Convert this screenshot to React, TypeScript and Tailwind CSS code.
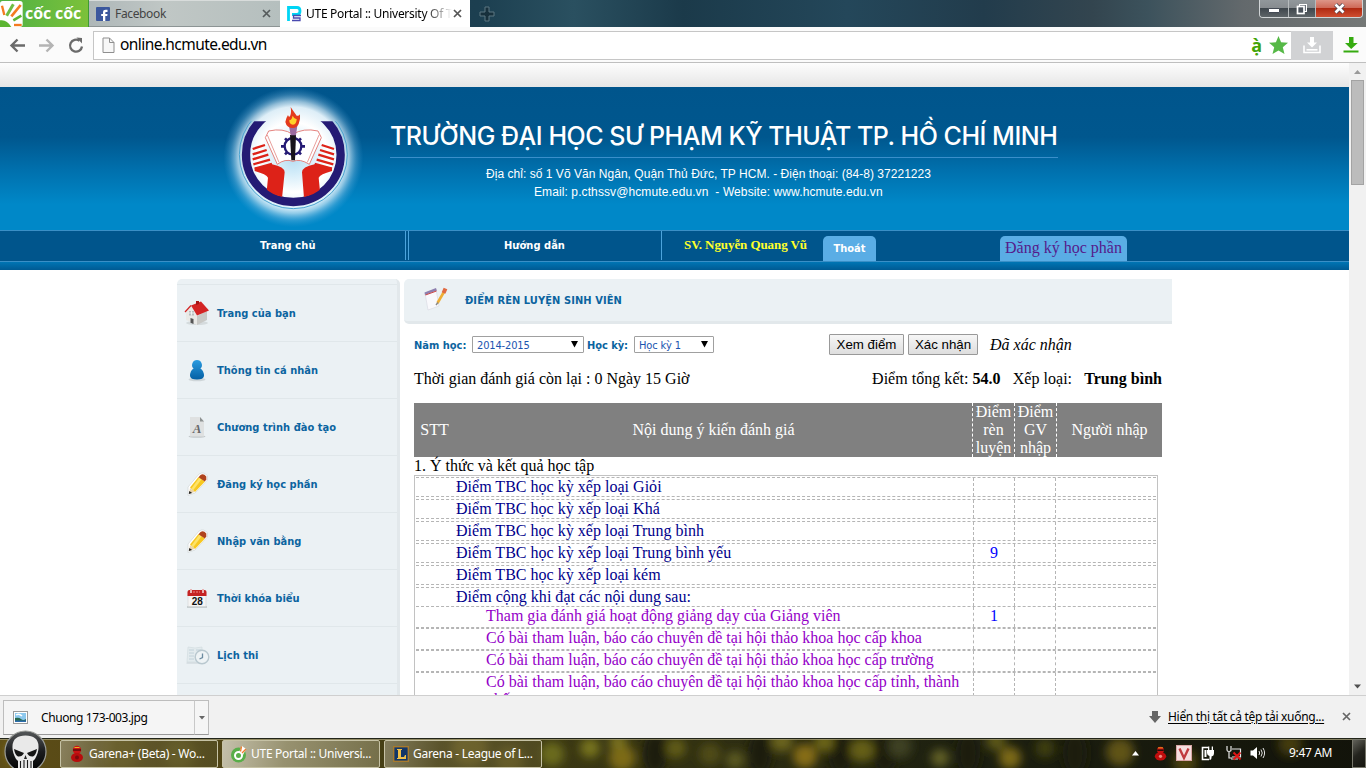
import React from "react";

const segoe = "font-['Noto_Sans','Open_Sans',sans-serif]";
const tahoma = "font-['DejaVu_Sans_Condensed','DejaVu_Sans',sans-serif]";
const times = "font-['Liberation_Serif',serif]";
const arial = "font-['Liberation_Sans',sans-serif]";

function CloseX({ color }: { color: string }) {
  return (
    <svg width="9" height="9" viewBox="0 0 9 9" className="shrink-0">
      <path d="M1 1l7 7M8 1l-7 7" stroke={color} strokeWidth="1.7" />
    </svg>
  );
}

function CocCocLogo() {
  return (
    <svg width="23" height="26" viewBox="0 0 69 78" className="shrink-0">
      <rect width="68" height="78" rx="8" fill="#fff" />
      <path d="M0 78V58Q20 54 34 78z" fill="#5cb531" />
      <path d="M6 14l7 28" stroke="#f47b20" strokeWidth="7" />
      <path d="M20 44L40 10" stroke="#6fbe44" strokeWidth="9" />
      <path d="M34 46L62 12" stroke="#f47b20" strokeWidth="8" />
      <path d="M40 58L64 44" stroke="#5cb531" strokeWidth="8" />
      <path d="M42 72h23" stroke="#f47b20" strokeWidth="7" />
    </svg>
  );
}

function TabStrip() {
  return (
    <div className="flex h-[27px] w-full bg-[linear-gradient(90deg,#1f3441_0%,#1c3f50_35%,#2a5060_42%,#1b3a4a_50%,#24475a_62%,#223c4c_72%,#33454f_80%,#3c525c_84%,#63696c_91%,#757877_100%)]">
      <div className="flex h-[27px] w-[89px] items-center border-r border-[#3f9b34] bg-[linear-gradient(90deg,#4fb144,#7cc13a)]">
        <CocCocLogo />
        <span className="ml-[2px] mb-[2px] font-['Open_Sans',sans-serif] text-[16px] font-bold leading-none tracking-[-0.1px] whitespace-nowrap text-white">cốc cốc</span>
      </div>
      <div className="flex h-[27px] w-[191px] items-center border-t border-b border-t-[#d8dcdb] border-b-[#8c9494] bg-[linear-gradient(90deg,#aeb7b8,#c0c7c5_40%,#b5bfbe)] pl-[7px] pr-[9px]">
        <svg width="14" height="14" viewBox="0 0 14 14" className="shrink-0">
          <rect width="14" height="14" rx="1" fill="#3b579d" />
          <path d="M7 14V9H5.200V7H7V5.500C7 3.500 8 2.800 9.700 2.800H11.500V5H10.200C9.500 5 9.300 5.300 9.300 6V7H11.500L11.200 9H9.300V14z" fill="#fff" />
        </svg>
        <span className={`${segoe} ml-[5px] text-[12px] leading-none text-[#444] whitespace-nowrap tracking-[-0.35px]`}>Facebook</span>
        <span className="grow" />
        <CloseX color="#555b5c" />
      </div>
      <div className="flex h-[27px] w-[190px] items-center bg-white pl-[7px] pr-[8px]">
        <svg width="15" height="16" viewBox="0 0 15 16" className="shrink-0">
          <path d="M1.500 15V1.500H10Q13 1.500 13 5T10 8.500H5" stroke="#00d5f5" strokeWidth="2.800" fill="none" />
          <path d="M14 9.500H6.500V12H13V14.500H5" stroke="#4a4ab0" strokeWidth="1.300" fill="none" />
        </svg>
        <span className={`${segoe} ml-[4px] w-[146px] text-[12px] leading-[18px] tracking-[-0.28px] whitespace-nowrap text-black [mask-image:linear-gradient(90deg,#000_118px,transparent_146px)]`}>UTE Portal :: University Of T</span>
        <span className="grow" />
        <CloseX color="#555" />
      </div>
      <div className="flex h-[27px] w-[34px] items-center justify-center">
        <svg width="16" height="16" viewBox="0 0 16 16">
          <path d="M6 1h4v5h5v4h-5v5H6v-5H1V6h5z" fill="#17303c" stroke="#5d7681" />
        </svg>
      </div>
      <div className="grow" />
      <div className="mr-[3px] flex h-[18px] w-[104px] overflow-hidden rounded-b-[4px] border border-t-0 border-[#d0d4d6]">
        <div className="flex w-[29px] items-center justify-center border-r border-[#b6bbbd] bg-[linear-gradient(#91979b_0,#878c90_45%,#3f474d_50%,#5d6468)]">
          <span className="mt-[3px] h-[5px] w-[12px] rounded-[1px] border border-[#444b55] bg-white" />
        </div>
        <div className="flex w-[27px] items-center justify-center border-r border-[#b6bbbd] bg-[linear-gradient(#91979b_0,#878c90_45%,#3f474d_50%,#5d6468)]">
          <svg width="12" height="12" viewBox="0 0 12 12">
            <rect x="3.500" y="1.500" width="7" height="7" fill="#6b737c" stroke="#fff" />
            <rect x="1.500" y="3.500" width="6.500" height="7" fill="#4b535c" stroke="#fff" strokeWidth="1.700" />
          </svg>
        </div>
        <div className="flex grow items-center justify-center bg-[linear-gradient(#dd9688_0,#cf6a58_45%,#b02a12_50%,#cf4e30)]">
          <svg width="13" height="11" viewBox="0 0 13 11">
            <path d="M2.500 1.500l8 8M10.500 1.500l-8 8" stroke="#4d4450" strokeWidth="4.200" />
            <path d="M2.500 1.500l8 8M10.500 1.500l-8 8" stroke="#fff" strokeWidth="2.600" />
          </svg>
        </div>
      </div>
    </div>
  );
}

function Toolbar() {
  return (
    <div className="flex h-[36px] items-center border-b border-[#bfbfbf] bg-[#fbfbfb] pt-px">
      <svg width="93" height="35" viewBox="0 0 93 35" className="shrink-0">
        <g fill="none" strokeWidth="2.400">
          <path d="M25 17.500H12M17.500 11.500l-6 6 6 6" stroke="#6b6b6b" />
          <path d="M39 17.500h13M46.500 11.500l6 6-6 6" stroke="#b4b4b4" />
          <path d="M79.500 12.700a6 6 0 1 0 2.500 5.800" stroke="#6b6b6b" strokeWidth="2.300" />
        </g>
        <path d="M76.500 9.500l5.500.5v5.500z" fill="#6b6b6b" />
      </svg>
      <div className="flex h-[29px] w-[1198px] items-center border border-r-0 border-[#c6c6c6] bg-white">
        <svg width="13" height="17" viewBox="0 0 13 17" className="ml-[8px] shrink-0">
          <path d="M1 1h6.500L12 5.500V15.500H1z" fill="#f7f7f7" stroke="#8f8f8f" />
          <path d="M7.500 1v4.500H12" fill="none" stroke="#8f8f8f" />
        </svg>
        <span className={`${segoe} ml-[5px] text-[15.500px] leading-none text-black whitespace-nowrap tracking-[-0.58px]`}>online.hcmute.edu.vn</span>
        <span className="grow" />
        <span className="mr-[7px] font-['Open_Sans',sans-serif] text-[18px] font-bold leading-none text-[#43a407]">ạ̀</span>
        <svg width="19" height="18" viewBox="0 0 19 18" className="mr-[3px] shrink-0">
          <path d="M9.500 0l2.600 6.200 6.900.5-5.200 4.500 1.700 6.800-6-3.600-6 3.600 1.700-6.800L0 6.700l6.900-.5z" fill="#56b947" />
        </svg>
      </div>
      <div className="flex h-[29px] w-[42px] items-center justify-center bg-[#d1d2d4]">
        <svg width="18" height="18" viewBox="0 0 18 18">
          <path d="M1 9.500v7h16v-7" stroke="#fff" strokeWidth="1.600" fill="none" />
          <path d="M3.500 13.800h11" stroke="#fff" strokeWidth="1.600" />
          <path d="M7 1h4v5.500h3L9 11.500 4 6.500h3z" fill="#fff" />
        </svg>
      </div>
      <svg width="16" height="16" viewBox="0 0 16 16" className="ml-[10px] shrink-0">
        <path d="M6 0h4.500v6h4.200L8.200 12 2 6h4z" fill="#36ab10" />
        <path d="M.5 13.500h15V15.500H.5z" fill="#36ab10" />
      </svg>
    </div>
  );
}

function UniversityLogo() {
  return (
    <svg width="187" height="143" viewBox="90 6 561 429" className="shrink-0">
      <defs>
        <radialGradient id="halo">
          <stop offset="0" stopColor="#b4dcf2" />
          <stop offset=".22" stopColor="#d2ecf9" />
          <stop offset=".5" stopColor="#fff" />
          <stop offset=".72" stopColor="#e9f6fd" stopOpacity=".95" />
          <stop offset=".8" stopColor="#cfe8f6" stopOpacity=".7" />
          <stop offset=".9" stopColor="#8cc5e8" stopOpacity=".3" />
          <stop offset="1" stopColor="#4fa5d8" stopOpacity="0" />
        </radialGradient>
        <clipPath id="below"><rect x="150" y="109" width="450" height="300" /></clipPath>
        <clipPath id="disc"><circle cx="370" cy="210" r="131" /></clipPath>
      </defs>
      <circle cx="370" cy="217" r="210" fill="url(#halo)" />
      <g clipPath="url(#below)" fill="none">
        <circle cx="370" cy="209" r="142" stroke="#241a74" strokeWidth="25" />
        <circle cx="370" cy="209" r="162" stroke="#4aa3d0" strokeWidth="3" />
      </g>
      <g clipPath="url(#disc)" fill="#dd2218">
        <path d="M254 248L306 238Q344 246 344 262L336 340H288L294 278Q290 268 254 258z" />
        <path d="M486 248L434 238Q396 246 396 262L402 340H452L446 278Q450 268 486 258z" />
      </g>
      <g stroke="#dd2218" strokeWidth="7">
        <path d="M248 192l37-12M248 208l42-13M248 223l47-14M250 238l50-14M254 251l52-14" />
        <path d="M492 192l-37-12M492 208l-42-13M492 223l-47-14M490 238l-50-14M486 251l-52-14" />
      </g>
      <path d="M296 138Q340 128 368 148Q400 128 444 138L454 158L418 238Q390 220 369 229Q345 220 322 238L286 158z" fill="#fff" stroke="#e5837f" strokeWidth="3" />
      <path d="M292 150L327 232M447 150L412 232" stroke="#e9a09c" strokeWidth="3" />
      <circle cx="369" cy="184" r="25" fill="none" stroke="#241a74" strokeWidth="7" />
      <g stroke="#241a74" strokeWidth="8">
        <path d="M369 160v-9M369 208v9M345 184h-12M393 184h12M352 167l-7-7M386 167l7-7M352 201l-7 7M386 201l7 7" />
      </g>
      <path d="M360 150h18l-3 76h-11z" fill="#17131a" />
      <path d="M357 122h25l-4 29h-16z" fill="#9b6aa0" />
      <path d="M362 66Q375 86 380 92Q386 94 390 88Q392 102 386 117Q380 129 369 129Q350 129 346 111Q348 99 354 90Q356 98 360 94Q365 84 362 66z" fill="#e43a1d" />
      <path d="M368 92Q374 104 380 102Q380 118 369 119Q357 118 358 104Q364 108 368 92z" fill="#ffd22a" />
    </svg>
  );
}

function Header() {
  return (
    <header>
      <div className="h-[24px] bg-[linear-gradient(#fdfdfd,#e6e6e6)]" />
      <div className="flex h-[143px] bg-[linear-gradient(#00558c_0,#00578e_35%,#0070ad_58%,#0088c8_82%,#0088c8_100%)] pl-[200px]">
        <UniversityLogo />
        <div className="ml-[3px] flex w-[668px] flex-col pt-[30px]">
          <h1 className="flex h-[41px] items-center border-b border-[#3a8fca] pb-px font-['Inter','Liberation_Sans',sans-serif] text-[25px] font-medium leading-none tracking-[-0.48px] whitespace-nowrap text-white">TRƯỜNG ĐẠI HỌC SƯ PHẠM KỸ THUẬT TP. HỒ CHÍ MINH</h1>
          <p className={`${arial} mt-[7px] pl-[96px] text-[12px] leading-[18px] tracking-[0.035px] whitespace-nowrap text-white`}>Địa chỉ: số 1 Võ Văn Ngân, Quận Thủ Đức, TP HCM. - Điện thoại: (84-8) 37221223</p>
          <p className={`${arial} pl-[144px] text-[12px] leading-[18px] tracking-[0.1px] whitespace-pre text-white`}>Email: p.cthssv@hcmute.edu.vn  - Website: www.hcmute.edu.vn</p>
        </div>
      </div>
      <nav className="flex h-[32px] border-t border-b border-[#3a8fc6] bg-[#00558c]">
        <a className={`${tahoma} w-[405px] pl-[260px] text-[11px] font-bold leading-[30px] tracking-[0.1px] whitespace-nowrap text-white`}>Trang chủ</a>
        <a className={`${tahoma} h-[29px] w-[257px] border-r border-l border-[#4da4dc] p-0 text-[11px] font-bold text-white`}>
          <span className="ml-[2px] block h-[29px] border-l border-[#4da4dc] pl-[95px] leading-[30px] tracking-[0.05px] whitespace-nowrap">Hướng dẫn</span>
        </a>
        <span className={`${times} w-[161px] pl-[22px] text-[13px] font-semibold leading-[28px] tracking-[-0.08px] whitespace-nowrap text-[#ffff2a]`}>SV. Nguyễn Quang Vũ</span>
        <a className={`${tahoma} mt-[5px] h-[25px] w-[53px] rounded-t-[5px] bg-[#5aade5] text-center text-[11px] font-bold leading-[26px] text-white`}>Thoát</a>
        <a className={`${times} mt-[5px] ml-[124px] h-[25px] w-[127px] rounded-t-[5px] bg-[#5aade5] text-center text-[16px] leading-[24px] whitespace-nowrap text-[#551a8b]`}>Đăng ký học phần</a>
      </nav>
      <div className="h-[8px] bg-[linear-gradient(#0075b4,#005a93)]" />
    </header>
  );
}

function HouseIcon() {
  return (
    <svg width="26" height="26" viewBox="0 0 26 26">
      <ellipse cx="13" cy="23" rx="11" ry="2" fill="#d5dbdd" />
      <path d="M2 12l5-6 6 10v9L2 20z" fill="#e9e9e6" />
      <path d="M13 16l10-5v9l-10 5z" fill="#c9c9c6" />
      <path d="M7 5.500L17 1.500 25 10.500 13 15.500z" fill="#d32424" />
      <path d="M7 5.500L1 12" stroke="#d32424" strokeWidth="1.200" />
      <path d="M12 1h3v3l-3 1z" fill="#a51616" />
      <rect x="5" y="11" width="5" height="4.500" fill="#b8bdbd" />
      <path d="M7.500 11v4.500M5 13h5" stroke="#fff" strokeWidth=".7" />
      <path d="M6.500 18l3 1v5l-3-1.300z" fill="#555" />
    </svg>
  );
}

function PersonIcon() {
  return (
    <svg width="26" height="26" viewBox="0 0 26 26">
      <defs><linearGradient id="person" x2="0" y2="1"><stop stopColor="#2a9be0" /><stop offset="1" stopColor="#0560a4" /></linearGradient></defs>
      <ellipse cx="13" cy="22.500" rx="8.500" ry="1.700" fill="#cfd6d9" />
      <path d="M13 3a5 5 0 0 1 3.400 8.600Q20 14 20 19Q19.500 22.500 13 22.500T6 19Q6 14 9.600 11.600A5 5 0 0 1 13 3z" fill="url(#person)" />
    </svg>
  );
}

function LetterIcon() {
  return (
    <svg width="26" height="26" viewBox="0 0 26 26">
      <ellipse cx="13" cy="22.500" rx="8.500" ry="1.300" fill="#c3c9cb" />
      <path d="M6 3h10l4 4.500v15H6z" fill="#dfe1e1" />
      <path d="M16 3l4 4.500h-4z" fill="#8d9292" />
      <text x="13" y="18.500" textAnchor="middle" fontFamily="Liberation Serif" fontStyle="italic" fontWeight="bold" fontSize="13" fill="#686868">A</text>
    </svg>
  );
}

function PencilIcon() {
  return (
    <svg width="26" height="26" viewBox="0 0 26 26">
      <path d="M4 16L15 3Q20 0 23.500 5V9L11 22L4 24.500z" fill="#fff" stroke="#d4dadc" strokeWidth=".8" />
      <path d="M6 16.500L14.500 6l6.500 4.500L11 21z" fill="#f7c821" />
      <path d="M7.500 17.500l8-11 2.300 1.600L9 19.500z" fill="#fde36a" />
      <path d="M14.500 6.200l2-2.200Q19.500 2 22.300 5.500V8.500l-1.500 2z" fill="#b0431d" />
      <path d="M6 17l4.900 3.700L5 23z" fill="#e9d3a8" />
      <path d="M5.300 20l2.900 1.900L4.800 23z" fill="#222" />
    </svg>
  );
}

function CalendarIcon() {
  return (
    <svg width="26" height="26" viewBox="0 0 26 26">
      <path d="M3 22h20" stroke="#bcc3c6" strokeWidth="1.500" />
      <rect x="4" y="6" width="18" height="15.500" rx="1" fill="#f4f4f4" stroke="#cfcfcf" strokeWidth=".5" />
      <path d="M3.500 11V7Q3.500 5 5.500 5h15q2 0 2 2v4z" fill="#c52323" />
      <path d="M7 4v4M19 4v4" stroke="#e9b2b2" strokeWidth="2" />
      <path d="M9 7h7" stroke="#e88" strokeWidth="1" strokeDasharray="2 1" />
      <text x="13.200" y="19.800" textAnchor="middle" fontFamily="Liberation Sans" fontWeight="bold" fontSize="10" fill="#111">28</text>
    </svg>
  );
}

function ScheduleIcon() {
  return (
    <svg width="26" height="26" viewBox="0 0 26 26">
      <path d="M4 5l7 1 7-1v15H3z" fill="#e3ebee" stroke="#cfdadd" strokeWidth=".6" />
      <path d="M5 8h5M5 11h5M5 14h5M12 8h5M5 17h5" stroke="#c2d2da" />
      <path d="M2.500 21h14" stroke="#c8d1d5" />
      <circle cx="18" cy="15" r="6.800" fill="#eef3f5" stroke="#b9c8cf" strokeWidth="1.400" />
      <path d="M18.500 11.500V15.500L15.500 17" stroke="#6c8ba0" strokeWidth="1.300" fill="none" />
    </svg>
  );
}

const menu = [
  { label: "Trang của bạn", icon: <HouseIcon /> },
  { label: "Thông tin cá nhân", icon: <PersonIcon /> },
  { label: "Chương trình đào tạo", icon: <LetterIcon /> },
  { label: "Đăng ký học phần", icon: <PencilIcon /> },
  { label: "Nhập văn bằng", icon: <PencilIcon /> },
  { label: "Thời khóa biểu", icon: <CalendarIcon /> },
  { label: "Lịch thi", icon: <ScheduleIcon /> },
  { label: "", icon: null },
];

function Sidebar() {
  return (
    <aside className="h-[430px] w-[223px] shrink-0 rounded-t-[5px] border-r-[3px] border-[#e2e8eb] bg-[#ebf1f4] pt-[5px]">
      {menu.map((m, i) => (
        <div key={i} className="flex h-[57px] items-center border-t border-[#e0e7ea] pl-[7px]">
          {m.icon}
          <span className={`${tahoma} mt-[2px] ml-[7px] text-[11px] font-bold tracking-[0.03px] whitespace-nowrap text-[#0b64a0]`}>{m.label}</span>
        </div>
      ))}
    </aside>
  );
}

const rows = [
  { t: "Điểm TBC học kỳ xếp loại Giỏi", v: "" },
  { t: "Điểm TBC học kỳ xếp loại Khá", v: "" },
  { t: "Điểm TBC học kỳ xếp loại Trung bình", v: "" },
  { t: "Điểm TBC học kỳ xếp loại Trung bình yếu", v: "9" },
  { t: "Điểm TBC học kỳ xếp loại kém", v: "" },
  { t: "Điểm cộng khi đạt các nội dung sau:", v: "" },
];

const subRows = [
  { t: "Tham gia đánh giá hoạt động giảng dạy của Giảng viên", v: "1" },
  { t: "Có bài tham luận, báo cáo chuyên đề tại hội thảo khoa học cấp khoa", v: "" },
  { t: "Có bài tham luận, báo cáo chuyên đề tại hội thảo khoa học cấp trường", v: "" },
  { t: "Có bài tham luận, báo cáo chuyên đề tại hội thảo khoa học cấp tỉnh, thành phố", v: "" },
];

function ScoreCells({ v }: { v: string }) {
  return (
    <>
      <span className="w-[41px] shrink-0 border-l border-dashed border-[#b5b5b5] text-center text-[#0000ff]">{v}</span>
      <span className="w-[41px] shrink-0 border-l border-dashed border-[#b5b5b5]" />
      <span className="grow border-l border-dashed border-[#b5b5b5]" />
    </>
  );
}

function SelectBox({ value, wide }: { value: string; wide?: boolean }) {
  return (
    <div className={`${tahoma} ${wide ? "w-[112px]" : "w-[80px]"} flex h-[17px] items-center justify-between rounded-[1px] border border-[#a0a0a0] bg-white pr-[5px] pl-[4px] text-[11px] leading-none text-[#1b55b0] whitespace-nowrap`}>
      <span className="mt-px tracking-[-0.15px]">{value}</span>
      <svg width="7" height="7" viewBox="0 0 7 7"><path d="M0 0h7L3.500 6.500z" fill="#000" /></svg>
    </div>
  );
}

function Content() {
  return (
    <main className={`${times} ml-[4px] w-[768px] text-[16px] text-black`}>
      <div className="flex h-[45px] items-center rounded-l-[5px] border-b-[3px] border-[#e2e8eb] bg-[#ebf1f4] pl-[19px]">
        <svg width="26" height="26" viewBox="0 0 26 26" className="shrink-0">
          <path d="M2 6l11-4 3 17-11 4z" fill="#f9f9fc" stroke="#d6d7e0" strokeWidth=".6" />
          <path d="M1.500 5.500L13 1l.8 2.500L2 8z" fill="#8d7fae" />
          <path d="M2.500 8l11-4" stroke="#c44" strokeWidth="1" />
          <path d="M21.500 4L14.500 16" stroke="#eeae35" strokeWidth="2.600" />
          <path d="M22.500 1.500L20.500 6" stroke="#e06a42" strokeWidth="4" />
          <path d="M15 15.500l-2 2.500" stroke="#888" strokeWidth="1.400" />
        </svg>
        <h2 className={`${tahoma} mt-[3px] ml-[16px] text-[11px] font-bold tracking-[0.08px] whitespace-nowrap text-[#0b64a0]`}>ĐIỂM RÈN LUYỆN SINH VIÊN</h2>
      </div>
      <div className="flex h-[21px] items-center pl-[10px] mt-[10px]">
        <span className={`${tahoma} mt-[3px] w-[58px] text-[11px] font-bold tracking-[0px] whitespace-nowrap text-[#0b64a0]`}>Năm học:</span>
        <SelectBox value="2014-2015" wide />
        <span className={`${tahoma} mt-[3px] ml-[3px] w-[47px] text-[11px] font-bold tracking-[-0.05px] whitespace-nowrap text-[#0b64a0]`}>Học kỳ:</span>
        <SelectBox value="Học kỳ 1" />
        <button className={`${arial} ml-[115px] h-[21px] w-[75px] rounded-[1px] border border-[#999] bg-[linear-gradient(#f6f6f6,#dedede)] text-[13.300px] leading-[17px] whitespace-nowrap`}>Xem điểm</button>
        <button className={`${arial} ml-[4px] h-[21px] w-[70px] rounded-[1px] border border-[#999] bg-[linear-gradient(#f6f6f6,#dedede)] text-[13.300px] leading-[17px] whitespace-nowrap`}>Xác nhận</button>
        <em className="ml-[12px] whitespace-nowrap">Đã xác nhận</em>
      </div>
      <div className="mt-[15px] flex h-[18px] justify-between pr-[10px] pl-[10px] leading-[18px] whitespace-pre">
        <span>Thời gian đánh giá còn lại : 0 Ngày 15 Giờ</span>
        <span className="tracking-[0.03px]">Điểm tổng kết: <b>54.0</b>   Xếp loại:   <b>Trung bình</b></span>
      </div>
      <div className="mt-[15px] ml-[10px] flex h-[54px] w-[748px] items-center bg-[#808080] text-center leading-[18px] text-white">
        <span className="w-[41px]">STT</span>
        <span className="w-[517px]">Nội dung ý kiến đánh giá</span>
        <span className="h-[54px] w-[42px] border-l border-dashed border-white">Điểm rèn luyện</span>
        <span className="h-[54px] w-[42px] border-l border-dashed border-white">Điểm GV nhập</span>
        <span className="h-[54px] w-[106px] border-l border-dashed border-white leading-[54px]">Người nhập</span>
      </div>
      <p className="ml-[10px] h-[18px] leading-[18px]">1. Ý thức và kết quả học tập</p>
      <div className="ml-[10px] w-[744px] border border-[#c2c2c2] px-px pt-px leading-[18px] whitespace-nowrap">
        {rows.map((r, i) => (
          <div key={i} className={`${i === rows.length - 1 ? "" : "mb-[2px]"} flex h-[20px] border-t border-b border-dashed border-[#b5b5b5]`}>
            <span className="w-[557px] shrink-0 pl-[40px] tracking-[0.02px] text-[#00008b]">{r.t}</span>
            <ScoreCells v={r.v} />
          </div>
        ))}
        {subRows.map((r, i) => (
          <div key={i} className={`${i === 0 ? "h-[21px]" : i === 3 ? "h-[60px] border-t" : "h-[22px] border-t"} flex border-b border-dashed border-[#b5b5b5]`}>
            <span className="w-[557px] shrink-0 pl-[70px] whitespace-normal text-[#9400c8]">{r.t}</span>
            <ScoreCells v={r.v} />
          </div>
        ))}
      </div>
    </main>
  );
}

function Scrollbar() {
  return (
    <div className="flex h-[632px] w-[17px] flex-col items-center bg-[#f1f1f1]">
      <svg width="17" height="17" viewBox="0 0 17 17"><path d="M5 11l3.500-4L12 11z" fill="#9a9a9a" /></svg>
      <div className="h-[105px] w-[13px] border border-[#a3a3a3] bg-[#bcbcbc]" />
      <span className="grow" />
      <svg width="17" height="17" viewBox="0 0 17 17"><path d="M5 6.500h7l-3.500 4z" fill="#505050" /></svg>
    </div>
  );
}

function DownloadBar() {
  return (
    <div className="flex h-[43px] shrink-0 border-t border-[#cfcfcf] bg-[#f1f1f1] pt-[4px] pl-[3px]">
      <div className="flex h-[35px] w-[192px] items-center border border-[#bdbdbd] border-b-[#999] border-r-[#c8c8c8] bg-[#f5f5f5] pl-[9px]">
        <svg width="15" height="13" viewBox="0 0 15 13">
          <rect x=".5" y=".5" width="14" height="12" fill="#fff" stroke="#9a9a9a" />
          <rect x="2" y="2" width="11" height="9" fill="#8cc8ee" />
          <path d="M2 7q4-1 6 1t5 0v3H2z" fill="#27684e" /><path d="M2 9.500h11V11H2z" fill="#2d6cae" />
          <path d="M3 4q3-2 6 1" stroke="#fff" strokeWidth="1.500" fill="none" />
        </svg>
        <span className={`${segoe} ml-[13px] text-[12px] leading-none tracking-[-0.4px] whitespace-nowrap text-black`}>Chuong 173-003.jpg</span>
      </div>
      <div className="flex h-[35px] w-[14px] items-center justify-center border border-l-0 border-[#bdbdbd] border-b-[#999] bg-[#f5f5f5]">
        <svg width="6" height="4" viewBox="0 0 6 4"><path d="M0 0h6L3 3.500z" fill="#666" /></svg>
      </div>
      <span className="grow" />
      <div className="flex h-[33px] items-center">
        <svg width="12" height="12" viewBox="0 0 12 12"><path d="M3 0h6v5h3l-6 7-6-7h3z" fill="#666" /></svg>
        <span className={`${segoe} ml-[7px] w-[155px] text-[12px] leading-none tracking-[-0.3px] whitespace-nowrap text-black underline underline-offset-2`}>Hiển thị tất cả tệp tải xuống...</span>
        <span className="ml-[19px] mr-[15px] flex"><CloseX color="#666" /></span>
      </div>
    </div>
  );
}

const blobs = [
  [20, 14, 14, "#8a741c"], [552, 16, 12, "#6b6a1c"], [590, 10, 10, "#77731e"], [622, 20, 13, "#7d6a18"], [618, 4, 9, "#78701e"],
  [676, 10, 10, "#605c14"], [710, 16, 11, "#504c18"], [735, 22, 9, "#5c5a20"], [782, 3, 11, "#6a641c"], [805, 18, 12, "#866d15"],
  [824, 4, 10, "#6c6514"], [862, 12, 12, "#655e12"], [900, 8, 12, "#3c4020"], [940, 20, 9, "#626026"], [996, 3, 10, "#5c5618"],
  [1010, 20, 11, "#7b6916"], [1045, 10, 10, "#3c3c10"], [1120, 14, 14, "#5e5214"], [1185, 24, 12, "#4c4311"], [1290, 6, 12, "#423b10"],
  [120, 12, 20, "#6b5d1b"], [180, 16, 16, "#6e6524"], [470, 10, 18, "#7a6c22"], [510, 22, 14, "#746824"],
] as const;

const taskButtons = [
  {
    label: "Garena+ (Beta) - Wo...", active: false,
    icon: <svg width="16" height="18" viewBox="0 0 16 18"><circle cx="8" cy="5" r="4.200" fill="#c91414" /><ellipse cx="8" cy="12.500" rx="6" ry="4.600" fill="#b80d0d" /><path d="M4 5h8" stroke="#5b0a0a" strokeWidth="1.500" /><path d="M5.500 2.500h5" stroke="#eab020" /><circle cx="8" cy="12.500" r="2" fill="#7b0b0b" /></svg>,
  },
  {
    label: "UTE Portal :: Universi...", active: true,
    icon: <svg width="16" height="18" viewBox="0 0 16 18"><circle cx="7.500" cy="10" r="7.500" fill="#58ae49" /><circle cx="7.500" cy="10.500" r="3.500" fill="none" stroke="#fff" strokeWidth="2" /><path d="M8 7l3-6 4 3-3 6z" fill="#fff" /><path d="M9.500 6.500l1-5M11 8l4-4" stroke="#ef7b2c" strokeWidth="1.300" /></svg>,
  },
  {
    label: "Garena - League of L...", active: false,
    icon: <svg width="16" height="16" viewBox="0 0 16 16"><rect x=".7" y=".7" width="14.600" height="14.600" fill="#123668" stroke="#a87a2c" strokeWidth="1.400" /><path d="M4 3h5v1H8v7h3l1-2h1v4H4v-1h1V4H4z" fill="#f0bf48" /></svg>,
  },
];

function Taskbar() {
  return (
    <div className="relative h-[30px] w-full shrink-0 overflow-visible">
      <svg width="1366" height="30" viewBox="0 0 1366 30" className="absolute inset-0">
        <defs>
          <filter id="soft" x="-5%" y="-100%" width="110%" height="300%"><feGaussianBlur stdDeviation="5" /></filter>
          <linearGradient id="base"><stop stopColor="#5d4d17" /><stop offset=".4" stopColor="#3c3913" /><stop offset=".7" stopColor="#1d2010" /><stop offset="1" stopColor="#12130a" /></linearGradient>
        </defs>
        <rect width="1366" height="30" fill="url(#base)" />
        <g filter="url(#soft)">
          {[655, 760, 840, 885, 968, 1075].map((x) => <ellipse key={x} cx={x} cy="15" rx="12" ry="22" fill="#1a1d0c" />)}
          {blobs.map(([x, y, r, c], i) => <ellipse key={i} cx={x} cy={y} rx={r} ry={r} fill={c} />)}
        </g>
        <path d="M0 .5h1366" stroke="#22251a" /><path d="M0 1.500h1366" stroke="#a9a37e" strokeOpacity=".75" />
      </svg>
      <div className="relative flex h-[30px] items-center">
        <div className="-mt-[8px] ml-[4px] h-[38px] w-[43px] self-start overflow-hidden">
          <svg width="43" height="43" viewBox="0 0 43 43">
            <defs><linearGradient id="orb" x2="0" y2="1"><stop stopColor="#55585a" /><stop offset=".5" stopColor="#1b1c1e" /><stop offset="1" stopColor="#000" /></linearGradient></defs>
            <circle cx="21.500" cy="21.500" r="20.500" fill="url(#orb)" stroke="#9a9c98" strokeWidth="1.200" />
            <path d="M21.500 5.500Q34 5.500 34.500 16Q35 22 31 29L29 31V40H14V31L12 29Q8 22 8.500 16Q9 5.500 21.500 5.500z" fill="#e9e9e9" />
            <path d="M10 19L20 23Q18 27 14 26.500Q11 25 10 19zM33 19L23 23Q25 27 29 26.500Q32 25 33 19z" fill="#151515" />
            <path d="M21.500 25l-1.500 4h3z" fill="#222" />
            <path d="M16.500 31v10M20 30v10M23.500 30v10M27 31v10" stroke="#1b1b1b" strokeWidth="1.100" />
          </svg>
        </div>
        {taskButtons.map((b, i) => (
          <div key={b.label} className={`${i === 0 ? "ml-[13px]" : "ml-[4px]"} ${b.active ? "bg-[linear-gradient(100deg,#d6d3c2dd,#aaa586cc_40%,#8c8764aa)]" : "bg-[linear-gradient(100deg,#a19b80aa,#6a623a99_35%,#575026aa)]"} mt-[2px] flex h-[28px] w-[158px] items-center rounded-[2px] border border-[#c6c2a5] pl-[8px]`}>
            <span className="flex w-[20px]">{b.icon}</span>
            <span className={`${segoe} text-[12px] leading-none tracking-[-0.28px] whitespace-nowrap text-white`}>{b.label}</span>
          </div>
        ))}
        <span className="grow" />
        <div className="flex h-[30px] items-center">
          <svg width="7" height="5" viewBox="0 0 7 5"><path d="M0 4.500L3.500 0 7 4.500z" fill="#fff" /></svg>
          <svg width="13" height="17" viewBox="0 0 16 18" className="ml-[15px]"><circle cx="8" cy="5" r="4.200" fill="#d01414" /><ellipse cx="8" cy="12.500" rx="7" ry="5" fill="#c00d0d" /><path d="M4 5h8" stroke="#2b0a0a" strokeWidth="2" /><path d="M5 2h6" stroke="#eab020" /><circle cx="8" cy="12.500" r="2" fill="#e98b80" /></svg>
          <svg width="16" height="16" viewBox="0 0 16 16" className="ml-[9px]"><rect width="16" height="16" fill="#f5dede" /><rect x=".5" y=".5" width="15" height="15" fill="none" stroke="#d8a7a7" /><path d="M3.500 3.500L8 13l4.500-9.500" stroke="#c03a3e" strokeWidth="2.400" fill="none" /></svg>
          <svg width="14" height="16" viewBox="0 0 14 16" className="ml-[9px]"><path d="M7 2.500H1.500v12H8" stroke="#fff" strokeWidth="1.600" fill="none" /><path d="M3.500 5h2v7h-2z" fill="#fff" /><path d="M6 5h7v3q0 3-2.500 3.500V13q0 2-2 2V11Q6 10.500 6 8zM7 1.500h1.300V5H7zM10.700 1.500H12V5h-1.300z" fill="#fff" /></svg>
          <svg width="16" height="16" viewBox="0 0 16 16" className="ml-[11px]"><path d="M1 1v4q0 1.500 2 1.500T5 5V1M3 6v7h3M6 4h8.500v8H6" stroke="#e8e8e8" strokeWidth="1.200" fill="none" /><path d="M5 14h7" stroke="#e8e8e8" /><path d="M7.500 7.500l7 7M14.500 7.500l-7 7" stroke="#e01515" strokeWidth="2" /></svg>
          <svg width="15" height="14" viewBox="0 0 15 14" className="ml-[8px]"><path d="M.5 4.500h2.500L7 1v12L3 9.500H.5z" fill="#fff" /><path d="M9 5q1.300 2 0 4M11 3.500q2.500 3.500 0 7M13 2q3.200 5 0 10" stroke="#e5e5e5" fill="none" /></svg>
          <span className={`${segoe} ml-[24px] w-[46px] text-[12px] leading-none tracking-[-0.35px] whitespace-nowrap text-white`}>9:47 AM</span>
          <span className="ml-[17px] h-[29px] w-[14px] border border-[#77776b] bg-[linear-gradient(140deg,#62625a,#24241e_50%,#15150f)]" />
        </div>
      </div>
    </div>
  );
}

export default function App() {
  return (
    <div className="flex h-[768px] w-[1366px] flex-col overflow-hidden bg-white">
      <TabStrip />
      <Toolbar />
      <div className="flex h-[632px] shrink-0">
        <div className="h-[632px] w-[1349px] overflow-hidden bg-white">
          <Header />
          <div className="flex items-start pt-[9px] pl-[177px]">
            <Sidebar />
            <Content />
          </div>
        </div>
        <Scrollbar />
      </div>
      <DownloadBar />
      <Taskbar />
    </div>
  );
}
